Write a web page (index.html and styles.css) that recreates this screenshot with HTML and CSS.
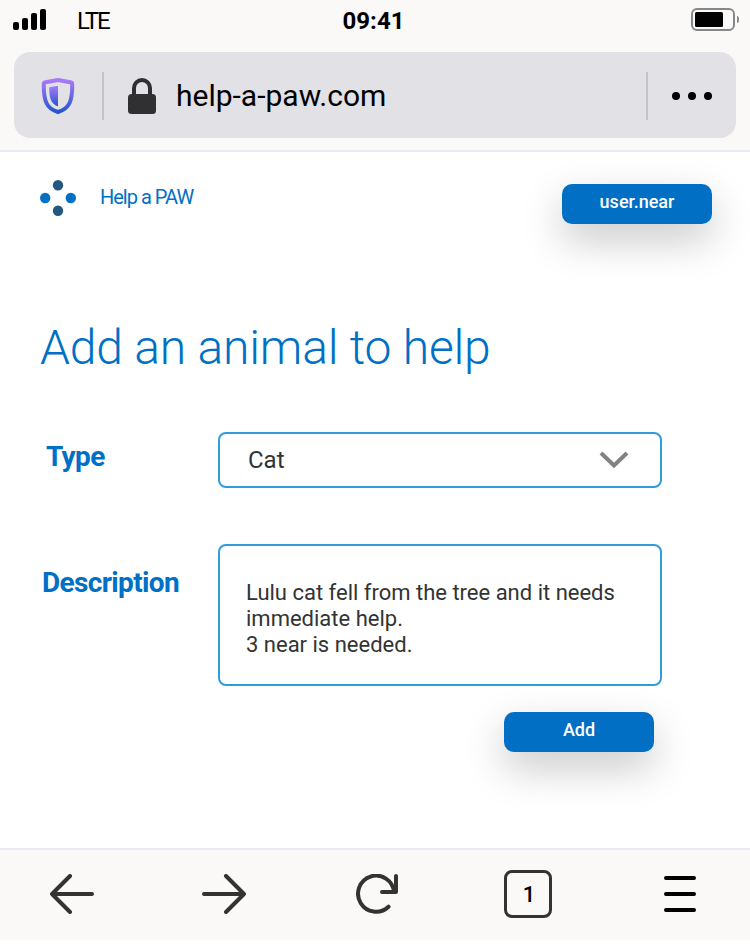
FILE: index.html
```html
<!DOCTYPE html>
<html lang="en">
<head>
<meta charset="utf-8">
<title>Help a PAW</title>
<link rel="stylesheet" href="styles.css">
</head>
<body>
<header class="browser">
  <div class="status">
    <div class="carrier">
      <svg width="34" height="22" viewBox="0 0 34 22"><rect x="0" y="13" width="6" height="8" rx="2"/><rect x="9" y="9" width="6" height="12" rx="2"/><rect x="18" y="4" width="6" height="17" rx="2"/><rect x="27" y="0" width="6" height="21" rx="2"/></svg>
      <span class="network">LTE</span>
    </div>
    <span class="time">09:41</span>
    <svg class="battery" width="48" height="23" viewBox="0 0 48 23"><rect x="1" y="1" width="42" height="21" rx="5" fill="none" stroke="#85888b" stroke-width="2"/><rect x="4" y="4" width="28" height="15" rx="1.5"/><path d="M46 8Q48 8 48 11.500T46 15Z" fill="#85888b"/></svg>
  </div>
  <div class="address">
    <svg class="shield" width="34" height="37" viewBox="0 0 34 37"><defs><linearGradient id="violet" x1="0" y1="0" x2="0" y2="1"><stop offset="0" stop-color="#a77af8"/><stop offset="1" stop-color="#2556cf"/></linearGradient></defs><path d="M17 2 L29.500 4.300Q31.300 4.700 31.200 6.500C31.400 22 29 30.500 17 34C5 30.500 2.600 22 2.800 6.500Q2.700 4.700 4.500 4.300Z" fill="none" stroke="url(#violet)" stroke-width="4" stroke-linejoin="round"/><path d="M8.300 9.300L17 7.700V28.500C9 25.500 8.300 19 8.300 9.300Z" fill="url(#violet)"/></svg>
    <span class="divider"></span>
    <svg class="lock" width="28" height="36" viewBox="0 0 28 36"><path d="M6 17V10a8 8 0 0 1 16 0v7" fill="none" stroke="#303032" stroke-width="4"/><rect y="16" width="28" height="20" rx="3.500" fill="#303032"/></svg>
    <span class="url">help-a-paw.com</span>
    <span class="divider"></span>
    <svg class="dots" width="40" height="8" viewBox="0 0 40 8"><circle cx="4" cy="4" r="4"/><circle cx="20" cy="4" r="4"/><circle cx="36" cy="4" r="4"/></svg>
  </div>
</header>
<main>
  <div class="site-bar">
    <svg width="36" height="36" viewBox="0 0 36 36"><g fill="#22577f"><circle cx="18" cy="5.200" r="5.200"/><circle cx="18" cy="30.800" r="5.200"/></g><g fill="#0070c6"><circle cx="5.200" cy="18" r="5.200"/><circle cx="30.800" cy="18" r="5.200"/></g></svg>
    <span class="brand">Help a PAW</span>
    <button class="btn">user.near</button>
  </div>
  <h1>Add an animal to help</h1>
  <form>
    <div class="row type-row">
      <span class="label label-type">Type</span>
      <div class="field select"><span>Cat</span><svg width="30" height="20" viewBox="0 0 30 20"><path d="M2 3L15 15.500L28 3" fill="none" stroke="#828282" stroke-width="4"/></svg></div>
    </div>
    <div class="row">
      <span class="label label-desc">Description</span>
      <div class="field area">Lulu cat fell from the tree and it needs<br>immediate help.<br>3 near is needed.</div>
    </div>
    <button class="btn add" type="button">Add</button>
  </form>
</main>
<footer>
  <svg width="44" height="40" viewBox="0 0 44 40"><path d="M42 20H2M20 2L2 20L20 38"/></svg>
  <svg width="44" height="40" viewBox="0 0 44 40"><path d="M2 20H42M24 2L42 20L24 38"/></svg>
  <svg width="42" height="40" viewBox="0 0 42 40"><path d="M32.500 32.700A18 18 0 1 1 38 18M26 18H40V2"/></svg>
  <span class="tabs">1</span>
  <svg class="menu" width="32" height="36" viewBox="0 0 32 36"><path d="M2 2H30M2 18H30M2 34H30"/></svg>
</footer>
</body>
</html>
```
FILE: styles.css
```css
* { box-sizing: border-box; }
body { margin: 0; height: 944px; background: #fff; font-family: Roboto, sans-serif; color: #000; }
svg { display: block; flex: none; }
.browser { height: 152px; background: #faf9f7; border-bottom: 2px solid #ebecf3; padding: 8px 14px 0; }
.status { height: 24px; display: grid; grid-template-columns: 1fr auto 1fr; font-size: 24px; line-height: 26px; margin-left: -1px; }
.carrier { display: flex; gap: 30px; padding-top: 1px; }
.network { letter-spacing: -2px; line-height: 24px; }
.time { font-weight: 700; margin: 0 1px 0 -1px; }
.battery { justify-self: end; margin-right: -3px; }
.address { margin-top: 20px; height: 86px; border-radius: 16px; background: #e2e1e6; display: flex; align-items: center; padding: 2px 24px 0 27px; }
.divider { width: 2px; height: 48px; background: #c4c4c4; }
.shield { margin-right: 27px; }
.lock { margin: 0 20px 0 24px; }
.url { font-size: 30px; line-height: 36px; flex: 1; }
.dots { margin-left: 24px; }
main { height: 696px; padding: 28px 38px 0 40px; }
.site-bar { display: flex; height: 44px; align-items: flex-start; }
.brand { font-size: 20px; line-height: 34px; color: #0070c6; letter-spacing: -1px; margin-left: 24px; flex: 1; }
.btn { width: 150px; height: 40px; margin: 4px 0 0; padding: 0 0 4px; border: 0; border-radius: 10px; background: #006fc4; color: #fff; font: 500 18px/36px Roboto, sans-serif; box-shadow: 0 16px 40px rgba(0, 0, 0, 0.22); }
h1 { margin: 96px 0 0; color: #0070c6; font-weight: 300; font-size: 48px; line-height: 56px; letter-spacing: -0.2px; }
form { width: 622px; margin-top: 56px; display: flex; flex-direction: column; }
.row { display: grid; grid-template-columns: 178px 444px; }
.type-row { margin-bottom: 56px; }
.label { color: #0070c6; font-weight: 700; font-size: 28px; line-height: 32px; letter-spacing: -0.65px; justify-self: start; align-self: start; }
.label-type { margin: 9px 0 0 6px; }
.label-desc { margin: 23px 0 0 2px; }
.field { border: 2px solid #2f9cdb; border-radius: 8px; color: #333; }
.select { height: 56px; display: flex; align-items: center; justify-content: space-between; padding: 0 31px 0 28px; font-size: 24px; }
.area { height: 142px; padding: 34px 0 0 26px; font-size: 22px; line-height: 26px; }
.add { align-self: flex-end; margin: 26px 8px 0 0; }
footer { height: 92px; background: #faf9f7; border-top: 2px solid #ebecf3; padding: 0 54px 2px 50px; display: flex; align-items: center; }
footer svg:nth-child(2) { margin-left: 108px; }
footer svg:nth-child(3) { margin-left: 110px; }
footer path { fill: none; stroke: #333; stroke-width: 4; stroke-linecap: round; stroke-linejoin: round; }
.tabs { width: 48px; height: 48px; margin: 0 112px 0 106px; padding-left: 2px; border: 3px solid #333; border-radius: 8px; text-align: center; font: 500 22px/43px Roboto, sans-serif; }
footer .menu path { stroke: #000; }
```
